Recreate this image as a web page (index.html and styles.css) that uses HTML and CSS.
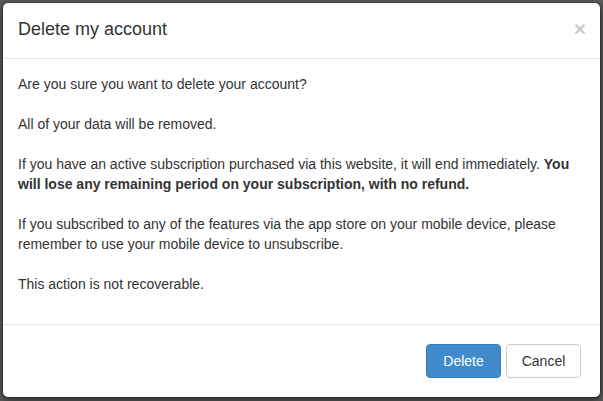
FILE: index.html
```html
<!DOCTYPE html>
<html lang="en">
<head>
<meta charset="utf-8">
<title>Delete my account</title>
<link rel="stylesheet" href="styles.css">
</head>
<body>
<div class="modal">
  <div class="modal-header">
    <button type="button" class="close" aria-label="Close">&times;</button>
    <h4 class="modal-title">Delete my account</h4>
  </div>
  <div class="modal-body">
    <p>Are you sure you want to delete your account?</p>
    <p>All of your data will be removed.</p>
    <p>If you have an active subscription purchased via this website, it will end immediately. <strong>You will lose any remaining period on your subscription, with no refund.</strong></p>
    <p>If you subscribed to any of the features via the app store on your mobile device, please remember to use your mobile device to unsubscribe.</p>
    <p>This action is not recoverable.</p>
  </div>
  <div class="modal-footer">
    <button type="button" class="btn btn-primary">Delete</button>
    <button type="button" class="btn btn-default">Cancel</button>
  </div>
</div>
</body>
</html>
```
FILE: styles.css
```css
html, body {
  margin: 0;
  padding: 0;
}
body {
  background: #5c5c5c;
  font-family: "Liberation Sans", Arial, sans-serif;
  font-size: 14px;
  line-height: 20px;
  color: #333;
  padding: 2px 2px 0 2px;
  height: 401px;
  box-sizing: border-box;
  overflow: hidden;
}
.modal {
  width: 599px;
  box-sizing: border-box;
  background: #fff;
  border: 1px solid rgba(0, 0, 0, 0.2);
  border-radius: 6px;
  box-shadow: 0 3px 9px rgba(0, 0, 0, 0.5);
  background-clip: padding-box;
}
.modal-header {
  padding: 14px 15px 16px;
  border-bottom: 1px solid #e5e5e5;
}
.modal-title {
  margin: 0;
  font-size: 18px;
  font-weight: normal;
  line-height: 25px;
  color: #333;
}
.close {
  float: right;
  margin-top: 1px;
  margin-right: -1px;
  padding: 0;
  border: 0;
  background: transparent;
  font-family: "Liberation Sans", Arial, sans-serif;
  font-size: 21px;
  font-weight: bold;
  line-height: 1;
  color: #000;
  opacity: 0.2;
  cursor: pointer;
}
.modal-body {
  padding: 15px;
}
.modal-body p {
  margin: 0 0 20px;
}
.modal-body p:last-child {
  margin-bottom: 15px;
}
.modal-footer {
  padding: 19px 19px 19px;
  border-top: 1px solid #e5e5e5;
  display: flex;
  justify-content: flex-end;
  gap: 5px;
}
.btn {
  min-width: 75px;
  height: 34px;
  box-sizing: border-box;
  padding: 6px 12px;
  font-family: "Liberation Sans", Arial, sans-serif;
  font-size: 14px;
  line-height: 20px;
  border: 1px solid transparent;
  border-radius: 4px;
  text-align: center;
  cursor: pointer;
}
.btn-primary {
  background: #428bca;
  border-color: #357ebd;
  color: #fff;
}
.btn-default {
  background: #fff;
  border-color: #ccc;
  color: #333;
}
```
